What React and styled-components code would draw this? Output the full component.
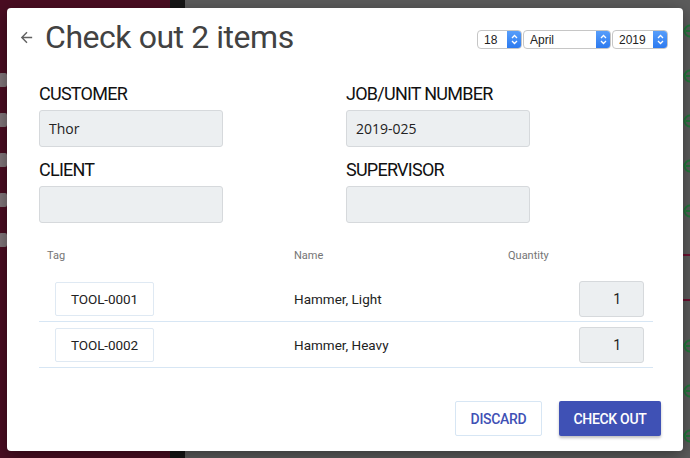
import React from 'react';
import styled, { createGlobalStyle } from 'styled-components';

const GlobalStyle = createGlobalStyle`
  html, body {
    margin: 0;
    padding: 0;
    width: 690px;
    height: 458px;
    overflow: hidden;
    font-family: Roboto, 'Liberation Sans', sans-serif;
  }
`;

// ========== Background page ==========
const Page = styled.div`
  position: relative;
  width: 690px;
  height: 458px;
  display: flex;
  overflow: hidden;
`;

const Sidebar = styled.div`
  width: 170px;
  background: #4a0d22;
  display: flex;
  flex-direction: column;
  gap: 26px;
  padding-top: 73px;
  box-sizing: border-box;
`;

const SideIcon = styled.div`
  width: 8px;
  height: 14px;
  margin-left: -1px;
  background: #8a8a8a;
  border-radius: 2px;
  opacity: 0.85;
`;

const Divider = styled.div`
  width: 15px;
  background: #161616;
`;

const Content = styled.div`
  flex: 1;
  background: #5c5c5c;
  display: flex;
  flex-direction: column;
  align-items: flex-end;
  padding-top: 8px;
`;

const BgRow = styled.div`
  height: 45px;
  width: 100%;
  flex-shrink: 0;
  display: flex;
  align-items: center;
  justify-content: flex-end;
  background: ${(p) =>
    p.$line
      ? 'linear-gradient(transparent 21px, #6e1030 21px, #6e1030 23px, transparent 23px)'
      : 'none'};
`;

const PlusIcon = () => (
  <svg width="14" height="14" viewBox="0 0 14 14" style={{ marginRight: -7 }}>
    <circle cx="7" cy="7" r="5.5" fill="none" stroke="#1f7a3a" strokeWidth="2" />
    <path d="M3 7h8" stroke="#1f7a3a" strokeWidth="2" />
  </svg>
);

// ========== Modal ==========
const Modal = styled.div`
  position: absolute;
  left: 7px;
  top: 8px;
  width: 676px;
  height: 443px;
  background: #fff;
  border-radius: 4px;
  box-shadow: 0 4px 16px rgba(0, 0, 0, 0.4);
  box-sizing: border-box;
  padding: 11px 15px 15px 11px;
  display: flex;
  flex-direction: column;
`;

const Header = styled.div`
  display: flex;
  align-items: center;
  justify-content: space-between;
  height: 36px;
`;

const TitleGroup = styled.div`
  display: flex;
  align-items: center;
  gap: 10px;
`;

const BackArrow = () => (
  <svg width="17" height="17" viewBox="0 0 24 24">
    <path d="M20 11H7.83l5.59-5.59L12 4l-8 8 8 8 1.41-1.41L7.83 13H20v-2z" fill="#616161" />
  </svg>
);

const Title = styled.h1`
  margin: 0;
  font-family: Roboto, sans-serif;
  font-weight: 400;
  font-size: 32px;
  color: #424242;
  letter-spacing: -0.45px;
`;

const DateGroup = styled.div`
  display: flex;
  gap: 1px;
  margin-top: 5px;
`;

const Select = styled.div`
  width: ${(p) => p.$w}px;
  height: 19px;
  box-sizing: border-box;
  border: 1px solid #c6c6c6;
  border-radius: 4px;
  background: #fff;
  display: flex;
  align-items: center;
  justify-content: space-between;
  font-family: 'Liberation Sans', Arial, sans-serif;
  font-size: 12px;
  color: #222;
  padding-left: 6px;
  overflow: hidden;
`;

const SelectArrow = styled.div`
  width: 15px;
  height: 19px;
  background: linear-gradient(#5aa0fb, #2a78ef);
  border-radius: 0 4px 4px 0;
  display: flex;
  align-items: center;
  justify-content: center;
  margin-right: -1px;
`;

const Chevrons = () => (
  <svg width="7" height="11" viewBox="0 0 7 11">
    <path d="M1 4l2.5-2.5L6 4M1 7l2.5 2.5L6 7" fill="none" stroke="#fff" strokeWidth="1.3" />
  </svg>
);

const FormGrid = styled.div`
  display: grid;
  grid-template-columns: 307px 307px;
  row-gap: 13px;
  padding-left: 21px;
  margin-top: 29px;
`;

const Field = styled.div`
  display: flex;
  flex-direction: column;
  gap: 7px;
`;

const Label = styled.label`
  font-family: Roboto, sans-serif;
  font-size: 18px;
  font-weight: 400;
  color: #111;
  letter-spacing: -0.75px;
  line-height: 19px;
`;

const TextBox = styled.div`
  width: 184px;
  height: 37px;
  box-sizing: border-box;
  background: #eceff1;
  border: 1px solid #d6d9dc;
  border-radius: 3px;
  display: flex;
  align-items: center;
  padding-left: 9px;
  font-family: 'Open Sans', 'Noto Sans', sans-serif;
  font-size: 14px;
  color: #222;
`;

const Table = styled.div`
  margin-left: 21px;
  width: 614px;
  margin-top: 21px;
`;

const Row = styled.div`
  display: grid;
  grid-template-columns: 247px 214px 1fr;
  align-items: center;
  box-sizing: border-box;
  height: ${(p) => (p.$head ? 22 : 46)}px;
  border-bottom: ${(p) => (p.$head ? 'none' : '1px solid #d7e6f4')};
  margin-bottom: ${(p) => (p.$head ? 10 : 0)}px;
`;

const HeadCell = styled.div`
  font-size: 11px;
  color: #757575;
  padding-left: 8px;
`;

const TagButton = styled.div`
  margin-left: 16px;
  width: 99px;
  height: 34px;
  box-sizing: border-box;
  border: 1px solid #dfe9f3;
  border-radius: 2px;
  display: flex;
  align-items: center;
  justify-content: center;
  font-size: 13.5px;
  color: #222;
  letter-spacing: -0.1px;
`;

const NameCell = styled.div`
  font-size: 13.5px;
  color: #222;
  padding-left: 8px;
`;

const QtyCell = styled.div`
  display: flex;
  justify-content: flex-end;
  padding-right: 9px;
`;

const QtyBox = styled.div`
  width: 65px;
  height: 36px;
  box-sizing: border-box;
  background: #eceff1;
  border: 1px solid #d6d9dc;
  border-radius: 3px;
  display: flex;
  align-items: center;
  justify-content: flex-end;
  padding-right: 22px;
  font-size: 14px;
  color: #222;
`;

const Footer = styled.div`
  margin-top: auto;
  display: flex;
  justify-content: flex-end;
  gap: 17px;
  padding-right: 7px;
`;

const Button = styled.button`
  height: 35px;
  width: ${(p) => (p.$primary ? 102 : 87)}px;
  padding: 0;
  font-family: Roboto, sans-serif;
  font-size: 14px;
  font-weight: 500;
  text-transform: uppercase;
  border-radius: 2px;
  cursor: pointer;
  background: ${(p) => (p.$primary ? '#3f51b5' : '#fff')};
  color: ${(p) => (p.$primary ? '#fff' : '#3f51b5')};
  border: ${(p) => (p.$primary ? 'none' : '1px solid #d7e6f4')};
  box-shadow: ${(p) => (p.$primary ? '0 2px 3px rgba(0,0,0,0.25)' : 'none')};
  letter-spacing: -0.3px;
`;

const items = [
  { tag: 'TOOL-0001', name: 'Hammer, Light', qty: 1 },
  { tag: 'TOOL-0002', name: 'Hammer, Heavy', qty: 1 },
];

const bgRows = [false, false, false, false, false, true, true, false, false, false];

const App = () => (
  <Page>
    <GlobalStyle />
    <Sidebar>
      {[0, 1, 2, 3, 4].map((i) => (
        <SideIcon key={i} />
      ))}
    </Sidebar>
    <Divider />
    <Content>
      {bgRows.map((line, i) => (
        <BgRow key={i} $line={line}>
          {!line && <PlusIcon />}
        </BgRow>
      ))}
    </Content>

    <Modal>
      <Header>
        <TitleGroup>
          <BackArrow />
          <Title>Check out 2 items</Title>
        </TitleGroup>
        <DateGroup>
          <Select $w={45}>
            18
            <SelectArrow><Chevrons /></SelectArrow>
          </Select>
          <Select $w={88}>
            April
            <SelectArrow><Chevrons /></SelectArrow>
          </Select>
          <Select $w={56}>
            2019
            <SelectArrow><Chevrons /></SelectArrow>
          </Select>
        </DateGroup>
      </Header>

      <FormGrid>
        <Field>
          <Label>CUSTOMER</Label>
          <TextBox>Thor</TextBox>
        </Field>
        <Field>
          <Label>JOB/UNIT NUMBER</Label>
          <TextBox>2019-025</TextBox>
        </Field>
        <Field>
          <Label>CLIENT</Label>
          <TextBox />
        </Field>
        <Field>
          <Label>SUPERVISOR</Label>
          <TextBox />
        </Field>
      </FormGrid>

      <Table>
        <Row $head>
          <HeadCell>Tag</HeadCell>
          <HeadCell>Name</HeadCell>
          <HeadCell>Quantity</HeadCell>
        </Row>
        {items.map((it) => (
          <Row key={it.tag}>
            <div><TagButton>{it.tag}</TagButton></div>
            <NameCell>{it.name}</NameCell>
            <QtyCell><QtyBox>{it.qty}</QtyBox></QtyCell>
          </Row>
        ))}
      </Table>

      <Footer>
        <Button>Discard</Button>
        <Button $primary>Check out</Button>
      </Footer>
    </Modal>
  </Page>
);

export default App;
